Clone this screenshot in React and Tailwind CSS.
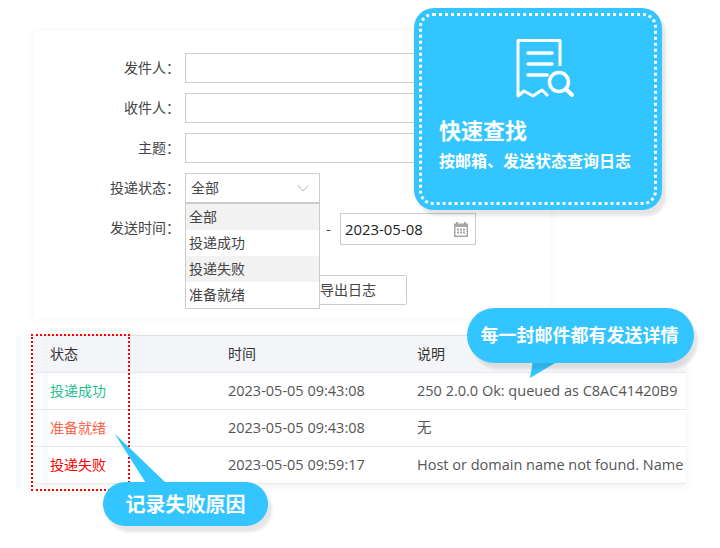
const cjk = { fontFamily: '"Noto Sans CJK SC", "Noto Sans", sans-serif' };
const latin = { fontFamily: '"Open Sans", "Noto Sans CJK SC", sans-serif' };

const rows = [
  { status: "投递成功", color: "text-[#1fbf8f]", time: "2023-05-05 09:43:08", note: "250 2.0.0 Ok: queued as C8AC41420B9" },
  { status: "准备就绪", color: "text-[#ff6347]", time: "2023-05-05 09:43:08", note: "无" },
  { status: "投递失败", color: "text-[#ff0000]", time: "2023-05-05 09:59:17", note: "Host or domain name not found. Name" },
];

function Field({ label }) {
  return (
    <div className="flex items-center h-[30px]">
      <label className="w-[133px] pb-[2px] text-right text-[14px] text-[#444]">{label}：</label>
      <div className="ml-[5px] w-[291px] h-[30px] border border-[#ccc] bg-white" />
    </div>
  );
}

function CalendarIcon() {
  return (
    <svg width="16" height="16" viewBox="0 0 16 16" fill="#a6a6a6">
      <path d="M1 2.500h2V1h2v1.500h6V1h2v1.500h2V16H1z" />
      <rect x="2.500" y="6" width="11" height="8.500" fill="#fff" />
      <rect x="4" y="7.500" width="2" height="2" />
      <rect x="7" y="7.500" width="2" height="2" />
      <rect x="10" y="7.500" width="2" height="2" />
      <rect x="4" y="10.500" width="2" height="2" />
      <rect x="7" y="10.500" width="2" height="2" />
      <rect x="10" y="10.500" width="2" height="2" />
    </svg>
  );
}

function SearchDocIcon() {
  return (
    <svg width="70" height="70" viewBox="0 0 70 70" fill="none" stroke="#fff" strokeWidth="3">
      <path d="M50 32V6.500H8V62l6-5 9 5 9-6 6 6" strokeLinejoin="round" />
      <path d="M18 19h24M18 30h24M18 41h19" strokeWidth="3.500" strokeLinecap="round" />
      <circle cx="49" cy="48" r="9.500" strokeWidth="3.500" />
      <path d="M56 55l6 6" strokeWidth="4" strokeLinecap="round" />
    </svg>
  );
}

export default function App() {
  return (
    <div className="relative w-[720px] h-[548px] overflow-hidden bg-white pt-[31px] pl-[34px]" style={cjk}>
      {/* search form */}
      <div className="w-[516px] h-[287px] bg-white pt-[22px] pl-[13px] shadow-[0_0_8px_rgba(0,0,0,0.05)] flex flex-col gap-[10px]">
        <Field label="发件人" />
        <Field label="收件人" />
        <Field label="主题" />
        <div className="relative flex items-center h-[30px]">
          <label className="w-[133px] pb-[2px] text-right text-[14px] text-[#444]">投递状态：</label>
          <div className="ml-[5px] w-[135px] h-[30px] border border-[#ccc] bg-white flex items-center justify-between pl-[5px] pr-[10px] text-[14px] text-[#444]">
            <span className="pb-[2px]">全部</span>
            <svg width="12" height="8" viewBox="0 0 12 8" fill="none" stroke="#bbb"><path d="M.5 1l5.500 6 5.500-6" /></svg>
          </div>
          <div className="absolute left-[138px] top-[29px] z-10 w-[135px] border border-[#ccc] border-t-2 bg-white text-[14px] text-[#444]">
            <div className="h-[26px] leading-[24px] pl-[3px] bg-[#f2f2f2]">全部</div>
            <div className="h-[26px] leading-[24px] pl-[3px]">投递成功</div>
            <div className="h-[26px] leading-[24px] pl-[3px] bg-[#f2f2f2]">投递失败</div>
            <div className="h-[26px] leading-[24px] pl-[3px]">准备就绪</div>
          </div>
        </div>
        <div className="flex items-start h-[32px]">
          <label className="w-[133px] h-[30px] leading-[28px] text-right text-[14px] text-[#444]">发送时间：</label>
          <div className="ml-[5px] w-[135px] h-[32px] border border-[#ccc]" />
          <span className="w-[20px] h-[30px] leading-[30px] pr-[3px] text-center text-[14px] text-[#444]">-</span>
          <div className="w-[136px] h-[32px] border border-[#ccc] flex items-center justify-between pl-[4px] pr-[6px] text-[14.900px] text-[#222]" style={latin}>
            2023-05-08
            <CalendarIcon />
          </div>
        </div>
        <div className="ml-[242px] mt-[20px] w-[118px] h-[30px] border border-[#ccc] rounded-[2px] flex items-center justify-center pb-[2px] text-[14px] text-[#444]">
          导出日志
        </div>
      </div>

      {/* log table */}
      <div className="mt-[17px] w-[652px] border-t border-[#e0e0e6] shadow-[0_2px_10px_rgba(0,0,0,0.06)] text-[14px]">
        <div className="flex items-center h-[37px] pb-[2px] bg-[#f4f5f9] border-b border-[#e8e8e8] text-[#333]">
          <div className="w-[194px] pl-[16px]">状态</div>
          <div className="w-[189px]">时间</div>
          <div>说明</div>
        </div>
        {rows.map((r) => (
          <div key={r.status} className="flex items-center h-[37px] pb-[2px] border-b border-[#e8e8e8] text-[#555] bg-white">
            <div className={`w-[194px] pl-[16px] ${r.color}`}>{r.status}</div>
            <div className="w-[189px] pt-[2px] text-[14.500px]" style={latin}>{r.time}</div>
            <div className="flex-1 pt-[2px] whitespace-nowrap overflow-hidden text-[14.500px]" style={latin}>{r.note}</div>
          </div>
        ))}
      </div>

      {/* annotations */}
      <div className="absolute left-[31px] top-[334px] w-[99px] h-[157px] border-2 border-dotted border-[#ff0000]" />

      <div className="absolute left-[414px] top-[8px] w-[248px] h-[202px] rounded-[20px] bg-[#33c5ff] p-[5px] shadow-[4px_6px_3px_rgba(0,0,0,0.1)]">
        <div className="w-full h-full rounded-[14px] border-[3px] border-dotted border-white text-white font-bold pl-[17px] flex flex-col">
          <div className="ml-[71px] mt-[18px]"><SearchDocIcon /></div>
          <div className="mt-[10px] text-[22px] leading-[30px]">快速查找</div>
          <div className="mt-[4px] text-[16px] leading-[24px] whitespace-nowrap">按邮箱、发送状态查询日志</div>
        </div>
      </div>

      <svg className="absolute left-[520px] top-[355px]" width="50" height="30" viewBox="0 0 50 30">
        <path d="M13 5l-3 18 30-18z" fill="#33c5ff" />
      </svg>
      <div className="absolute left-[467px] top-[308px] w-[227px] h-[55px] rounded-[28px] bg-[#33c5ff] shadow-[4px_6px_3px_rgba(0,0,0,0.1)] flex items-center justify-center pb-[3px] pr-[2px] text-white font-bold text-[18px]">
        每一封邮件都有发送详情
      </div>

      <svg className="absolute left-[110px] top-[430px]" width="60" height="56" viewBox="0 0 60 56">
        <path d="M4.500 3.500l31 49h20z" fill="#33c5ff" />
      </svg>
      <div className="absolute left-[103px] top-[482px] w-[165px] h-[44px] rounded-[22px] bg-[#33c5ff] shadow-[4px_6px_3px_rgba(0,0,0,0.1)] flex items-center justify-center pb-[1px] text-white font-bold text-[20px]">
        记录失败原因
      </div>
    </div>
  );
}
